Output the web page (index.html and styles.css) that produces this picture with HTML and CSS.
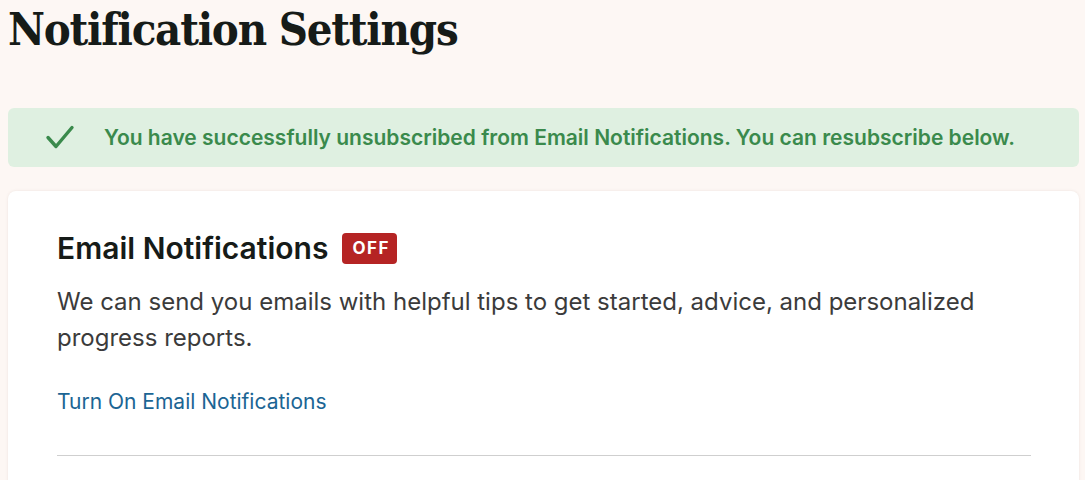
FILE: index.html
```html
<!DOCTYPE html>
<html lang="en">
<head>
<meta charset="utf-8">
<title>Notification Settings</title>
<link rel="stylesheet" href="styles.css">
</head>
<body>
<main class="page">
  <h1 class="page-title">Notification Settings</h1>
  <div class="alert">
    <svg class="alert-icon" width="30" height="26" viewBox="0 0 30 26" aria-hidden="true">
      <path d="M3 12.5 L11 21.5 L27 2.5" fill="none" stroke="#3a8a4c" stroke-width="3.4" stroke-linecap="round" stroke-linejoin="round"/>
    </svg>
    <p class="alert-text">You have successfully unsubscribed from Email Notifications. You can resubscribe below.</p>
  </div>
  <section class="card">
    <div class="card-head">
      <h2 class="card-title">Email Notifications</h2>
      <span class="badge">OFF</span>
    </div>
    <p class="card-desc">We can send you emails with helpful tips to get started, advice, and personalized progress reports.</p>
    <a class="card-link" href="#">Turn On Email Notifications</a>
    <hr class="divider">
  </section>
</main>
</body>
</html>
```

FILE: styles.css
```css
html, body {
  margin: 0;
  padding: 0;
  background: #fdf7f4;
}
body {
  font-family: Inter, "Noto Sans", sans-serif;
  overflow: hidden;
}
.page {
  padding: 0 6px 0 8px;
}
.page-title {
  margin: 0;
  padding-top: 2px;
  font-family: "DejaVu Serif", "Liberation Serif", serif;
  font-stretch: condensed;
  font-weight: 700;
  font-size: 45px;
  line-height: 56px;
  color: #161b18;
  letter-spacing: -1.2px;
}
.alert {
  margin-top: 50px;
  height: 59px;
  background: #dff0e1;
  border-radius: 6px;
  display: flex;
  align-items: center;
  padding-left: 37px;
}
.alert-icon {
  flex: none;
  margin-right: 29px;
}
.alert-text {
  margin: 0;
  font-size: 21px;
  font-weight: 600;
  color: #3a8a4c;
}
.card {
  margin-top: 24px;
  background: #fff;
  border-radius: 8px;
  box-shadow: 0 0 3px rgba(120, 90, 70, 0.12);
  padding: 40px 48px 40px 49px;
}
.card-head {
  display: flex;
  align-items: center;
  gap: 14px;
}
.card-title {
  margin: 0;
  font-size: 30px;
  font-weight: 600;
  color: #161b18;
  line-height: 34px;
}
.badge {
  background: #b52424;
  color: #fff;
  border-radius: 4px;
  font-size: 17px;
  font-weight: 700;
  letter-spacing: 1.5px;
  padding: 4px 7px 4px 10px;
  line-height: 23px;
}
.card-desc {
  margin: 19px 0 0;
  font-size: 24px;
  line-height: 36px;
  color: #3b3b3b;
  max-width: 930px;
}
.card-link {
  display: inline-block;
  margin-top: 32px;
  font-size: 21px;
  line-height: 28px;
  color: #1b6594;
  text-decoration: none;
}
.divider {
  margin: 39px 0 0;
  border: 0;
  border-top: 1px solid #cfcfcf;
}
```
